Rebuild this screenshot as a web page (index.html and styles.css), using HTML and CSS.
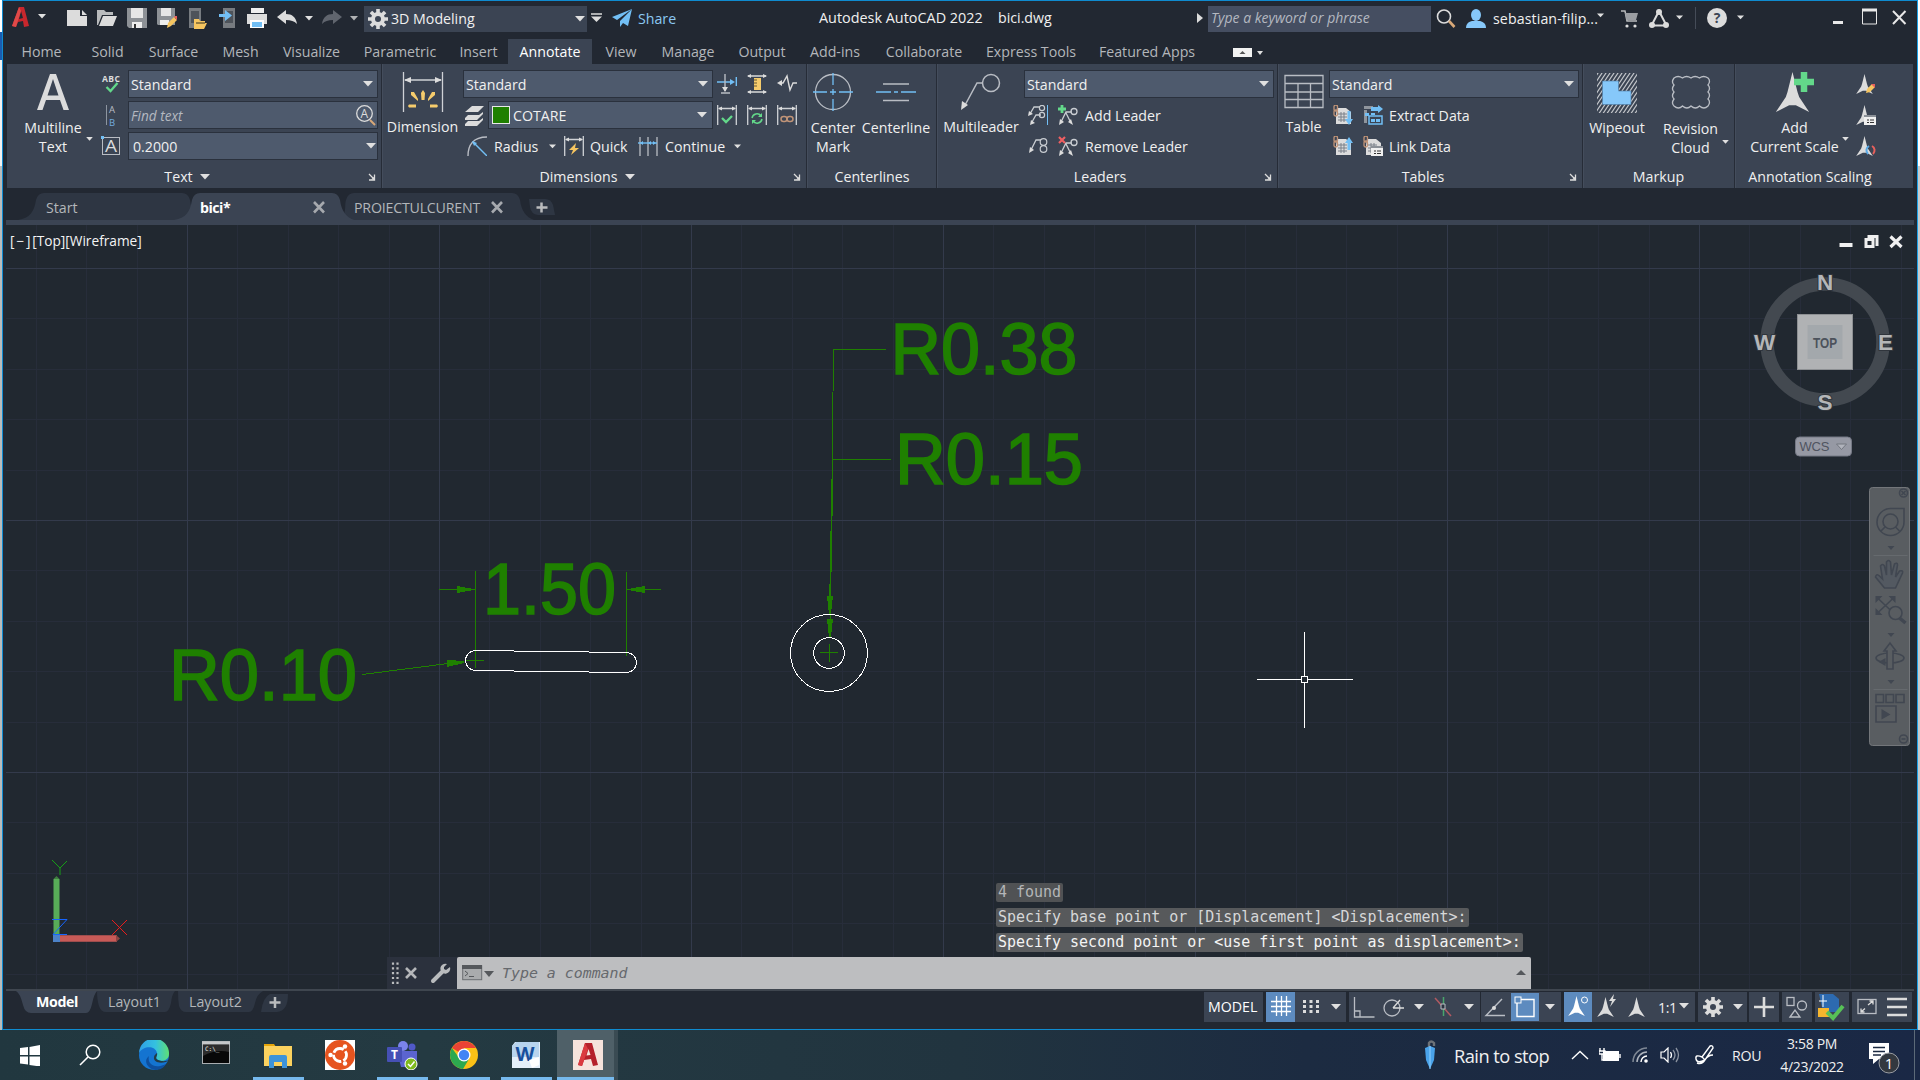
FILE: index.html
```html
<!DOCTYPE html>
<html lang="en">
<head>
<meta charset="utf-8">
<title>Autodesk AutoCAD 2022 - bici.dwg</title>
<link rel="stylesheet" href="styles.css">
</head>
<body>
<svg width="0" height="0" class="defs">
  <defs>
    <symbol id="arr" viewBox="0 0 10 6"><path d="M0 0h10L5 5.5z" fill="#e0e0e0"/></symbol>
    <symbol id="launch" viewBox="0 0 8 8"><path d="M1 1l5 5M6.5 1.5v5.5H1" stroke="#dcdcdc" stroke-width="1.3" fill="none"/><path d="M3 6.5h4V3z" fill="#dcdcdc"/></symbol>
    <symbol id="scale" viewBox="0 0 20 24"><path d="M10 0l3 12 1 3 6 9-8-4h-4l-8 4 6-9 1-3z"/></symbol>
    <symbol id="leader" viewBox="0 0 20 20"><path d="M3 17L8 7h6M12 16L8 8" fill="none" stroke="#c9cdd2" stroke-width="1.3"/><circle cx="16" cy="6.500" r="3" fill="none" stroke="#c9cdd2" stroke-width="1.3"/><path d="M1 20l1-6 4 3zM15 20l-5-3 3-3z" fill="#dcdcdc"/></symbol>
    <symbol id="sheet" viewBox="0 0 20 20"><path d="M4 3h9l5 4v12H3V9z" fill="#dcdcdc"/><path d="M5 9h9M5 12h9M5 15h9M8 7v10M11 7v10" stroke="#7b8089" stroke-width="1"/><rect x="1" y="0" width="3.500" height="6" rx="1.700" fill="none" stroke="#c09478" stroke-width="1.300"/><rect x="1" y="5" width="3.500" height="6" rx="1.700" fill="none" stroke="#c09478" stroke-width="1.300"/></symbol>
    <symbol id="dimbar" viewBox="0 0 20 20"><path d="M.7 0v20M19.300 0v20M2 3.500h16" stroke="#cfd2d6" stroke-width="1.300" fill="none"/><path d="M1 3.500l4-2v4zM19 3.500l-4-2v4z" fill="#dcdcdc"/></symbol>
    <symbol id="gear" viewBox="0 0 20 20"><g fill="#dcdcdc"><path fill-rule="evenodd" d="M10 3a7 7 0 1 0 0 14a7 7 0 0 0 0-14zm0 4a3 3 0 1 1 0 6a3 3 0 0 1 0-6z"/><path id="tooth" d="M8.200 0h3.600v4H8.200zM8.200 16h3.600v4H8.200z"/><use href="#tooth" transform="rotate(45 10 10)"/><use href="#tooth" transform="rotate(90 10 10)"/><use href="#tooth" transform="rotate(135 10 10)"/></g></symbol>
  </defs>
</svg>
<div class="screen">
<div class="edge edge-l"><i></i></div>
<div class="window">

  <header class="titlebar">
    <div class="app">
      <svg width="18" height="22" viewBox="0 0 18 22"><path d="M7 1h5l5 19-5 1-1-6-5 1-2 5-4-1z" fill="#c8272d"/><path d="M9 5l2 7-4 1z" fill="#222832"/><path d="M7 1l-7 19 4 1L9 5z" fill="#e04a49"/></svg>
      <svg width="8" height="5"><use href="#arr"/></svg>
    </div>
    <div class="qat">
      <svg width="30" height="24"><path d="M5 4h13v6h7v10H5z" fill="#dcdcdc"/><path d="M20 4l5 5h-5z" fill="#dcdcdc"/></svg>
      <svg width="30" height="24"><path d="M5 4h7l2 2h7v3H10L6 19H5z" fill="#b9bbbd"/><path d="M11 10h14l-4 10H7z" fill="#dcdcdc"/></svg>
      <svg width="30" height="24"><path d="M5 2h20v20H7l-2-2z" fill="#8d9196"/><path d="M9 2h12v10H9z" fill="#e6e6e6"/><path d="M10 16h10v6H10z" fill="#eee"/><path d="M12 18h2v4h-2z" fill="#333"/></svg>
      <svg width="30" height="24"><path d="M5 2h18v17H6l-1-1z" fill="#8d9196"/><path d="M9 2h10v8H9z" fill="#e6e6e6"/><path d="M8 14h9v5H8z" fill="#eee"/><path d="M15 22l1-5 6-6 3 3-6 6z" fill="#f6c560"/><path d="M22 11l1-1h2v4z" fill="#e8605c"/></svg>
      <svg width="30" height="24"><rect x="7" y="2" width="12" height="20" fill="#777b80"/><rect x="9" y="5" width="8" height="12" fill="#4e535a"/><path d="M12 13h5l1 2h5v2h2l-3 6H12z" fill="#f6c560"/><path d="M14 17h9" stroke="#35301e"/></svg>
      <svg width="30" height="24"><rect x="11" y="2" width="12" height="20" fill="#777b80"/><rect x="13" y="5" width="8" height="12" fill="#4e535a"/><path d="M7 8h6V4l7 5.500L13 15v-4H7z" fill="#72bff5"/></svg>
      <svg width="30" height="24"><path d="M9 2h13v5H9z" fill="#eee"/><path d="M5 8h20v10H5z" fill="#dcdcdc"/><path d="M8 14h14v8H8z" fill="#fff"/><path d="M10 16h10v5H10z" fill="#72bff5"/></svg>
      <svg width="30" height="24"><path d="M5 11l9-7v4c6 0 10 3 11 10-3-3-6-4-11-4v4z" fill="#dcdcdc"/></svg>
      <svg width="15" height="5"><use href="#arr" x="3" width="8" height="5"/></svg>
      <svg width="30" height="24"><path d="M25 11l-9-7v4C10 8 6 11 5 18c3-3 6-4 11-4v4z" fill="#60656e"/></svg>
      <svg width="15" height="5" class="dim"><use href="#arr" x="3" width="8" height="5"/></svg>
    </div>
    <div class="workspace"><svg width="20" height="20"><use href="#gear"/></svg><span>3D Modeling</span><svg width="10" height="6"><use href="#arr"/></svg></div>
    <svg class="custom" width="11" height="9"><path d="M0 1h11" stroke="#dcdcdc" stroke-width="1.500"/><path d="M0 3.500h11L5.500 9z" fill="#dcdcdc"/></svg>
    <svg class="plane" width="20" height="18" viewBox="0 0 20 18"><path d="M20 0L0 8l5 3zM20 0L8 12v6l3-4 5 3z" fill="#72bff5"/></svg>
    <span class="share">Share</span>
    <span class="apptitle">Autodesk AutoCAD 2022</span><span class="doctitle">bici.dwg</span>
    <svg class="tri" width="6" height="10"><path d="M0 0l6 5-6 5z" fill="#dcdcdc"/></svg>
    <div class="search">Type a keyword or phrase</div>
    <svg class="mag" width="20" height="20"><circle cx="8" cy="7.500" r="6.500" fill="none" stroke="#dcdcdc" stroke-width="1.600"/><path d="M13 12l5.500 6" stroke="#d8a878" stroke-width="2.600"/></svg>
    <svg class="user" width="22" height="20"><ellipse cx="11" cy="6" rx="5" ry="6" fill="#86c8fa"/><path d="M1 19c0-6 5-7 7-7h6c3 0 7 2 7 7z" fill="#86c8fa"/></svg>
    <span class="username">sebastian-filip...</span><svg width="7" height="5"><use href="#arr"/></svg>
    <svg class="cart" width="18" height="19"><path d="M0 1h4l2 10h10" fill="none" stroke="#b9bbbd" stroke-width="1.500"/><path d="M4 3h13l-2 7H5.500z" fill="#9b9ea3"/><circle cx="6" cy="16" r="1.600" fill="#ddd"/><circle cx="14" cy="16" r="1.600" fill="#ddd"/></svg>
    <svg class="a360" width="20" height="20"><path d="M10 2L2.500 16.500h15z" fill="none" stroke="#dcdcdc" stroke-width="2"/><circle cx="10" cy="3" r="3" fill="#dcdcdc"/><circle cx="3" cy="16" r="3" fill="#dcdcdc"/><circle cx="17" cy="16" r="3" fill="#dcdcdc"/></svg>
    <svg class="a360arr" width="7" height="5"><use href="#arr"/></svg>
    <i class="vsep"></i>
    <span class="help">?</span><svg class="helparr" width="7" height="5"><use href="#arr"/></svg>
    <svg class="winbtns" width="76" height="18" viewBox="0 0 76 18"><path d="M1 15.500h10" stroke="#e8e8e8" stroke-width="3"/><path d="M30.500 4v13h14V4" fill="none" stroke="#e8e8e8"/><path d="M30 3h15" stroke="#e8e8e8" stroke-width="3"/><path d="M61 4l12.500 13M73.500 4L61 17" stroke="#e8e8e8" stroke-width="2"/></svg>
  </header>

  <nav class="tabs">
    <span class="t1">Home</span><span class="t2">Solid</span><span class="t3">Surface</span><span class="t4">Mesh</span><span class="t5">Visualize</span><span class="t6">Parametric</span><span class="t7">Insert</span><span class="t8 on">Annotate</span><span class="t9">View</span><span class="t10">Manage</span><span class="t11">Output</span><span class="t12">Add-ins</span><span class="t13">Collaborate</span><span class="t14">Express Tools</span><span class="t15">Featured Apps</span>
    <svg width="31" height="10"><rect width="19" height="9" fill="#f2f2f2"/><path d="M6.500 6h6l-3-3z" fill="#555"/><path d="M24 3h6l-3 4z" fill="#e0e0e0"/></svg>
  </nav>

  <section class="ribbon">
    <div class="panel p-text">
      <div class="body">
        <div class="big">
          <svg width="46" height="46"><path fill-rule="evenodd" d="M20 4h6l13 36h-5.500l-3.500-10H16L12.500 40H7zM17.500 25.500h11L23 9z" fill="#dcdcdc"/></svg>
          <b>Multiline</b><b class="drop">Text<svg width="7" height="4"><use href="#arr"/></svg></b>
        </div>
        <div class="smalls">
          <svg width="22" height="28"><text x="1" y="12" font-size="8.500" font-weight="700" textLength="18" fill="#dcdcdc" font-family="Open Sans,sans-serif">ABC</text><path d="M5.500 17l4 4 7-8" fill="none" stroke="#63d88a" stroke-width="2.300"/></svg>
          <svg width="22" height="28"><path d="M5.500 4v20" stroke="#8d95a0"/><text x="8" y="12" font-size="9.500" fill="#b9bdc4" font-family="Open Sans,sans-serif">A</text><text x="8" y="24.500" font-size="9.500" fill="#72a9dd" font-family="Open Sans,sans-serif">B</text></svg>
          <svg width="22" height="28"><rect x="1.500" y="5.500" width="17" height="17" fill="none" stroke="#b9bdc4"/><path d="M0 4h3v3H0z" fill="#72bff5"/><text x="4" y="20" font-size="17" fill="#dcdcdc" font-family="Open Sans,sans-serif" textLength="12" lengthAdjust="spacingAndGlyphs">A</text></svg>
        </div>
        <div class="rows">
          <div class="combo">Standard<svg width="10" height="6"><use href="#arr"/></svg></div>
          <div class="combo ph"><em>Find text</em><svg width="20" height="21"><circle cx="8.500" cy="8.500" r="7.800" fill="none" stroke="#dcdcdc" stroke-width="1.300"/><path d="M14 15l5 5" stroke="#d8a878" stroke-width="2"/><text x="4.500" y="13" font-size="12" fill="#dcdcdc" font-family="Open Sans,sans-serif">A</text></svg></div>
          <div class="combo n">0.2000<svg width="10" height="6"><use href="#arr"/></svg></div>
        </div>
      </div>
      <div class="ptitle launch">Text<svg class="ta" width="10" height="6"><use href="#arr"/></svg><svg class="la" width="8" height="8"><use href="#launch"/></svg></div>
    </div>

    <div class="panel p-dim">
      <div class="body">
        <div class="big s1">
          <svg width="42" height="46"><path d="M1.500 2v40M40.500 2v40M3 10h36" stroke="#cfd2d6" stroke-width="1.300"/><path d="M2 10l7-3v6zM40 10l-7-3v6z" fill="#dcdcdc"/><path d="M19.500 30l-.5-7 2-3 2 3-.5 7zM16 31l-7-6 0-3 3 0 4 7zM26 31l7-6 0-3-3 0-4 7zM14 37.500H7l-1-1.500 1-1.500h7zM28 37.500h7l1-1.500-1-1.500h-7z" fill="#f6cc6c"/></svg>
          <b>Dimension</b>
        </div>
        <div class="rows">
          <div class="combo">Standard<svg width="10" height="6"><use href="#arr"/></svg></div>
          <div class="lay"><svg width="25" height="28"><path d="M2 11L9 5h12l-6 6zM2 17l3-3h11l4-3v2l-6 6H2zM2 23l3-3h11l4-3v2l-6 6H2z" fill="#dcdcdc"/></svg><div class="combo"><i class="sw"></i>COTARE<svg width="10" height="6"><use href="#arr"/></svg></div></div>
          <div class="tools">
            <svg width="20" height="20"><path d="M1 20C1 9 6 1 20 1" fill="none" stroke="#b9bdc4" stroke-width="1.400"/><path d="M6 6l14 14" stroke="#72bff5" stroke-width="1.400"/><path d="M5 5l5 2-3 3z" fill="#72bff5"/></svg><span class="c1">Radius</span><svg width="7" height="5"><use href="#arr"/></svg>
            <svg class="c2" width="20" height="20"><use href="#dimbar"/><path d="M12 7l-7 7h4l-2 5 8-7h-4z" fill="#f6c560"/></svg><span class="c3">Quick</span>
            <svg class="c4" width="20" height="20"><path d="M2 1v19M10 1v19M19 1v19" stroke="#b9bdc4" stroke-width="1.300"/><path d="M0 7h19" stroke="#72bff5" stroke-width="1.400"/><path d="M2 7l3-2v4zM10 7l3-2v4zM18 7l-3-2v4z" fill="#72bff5"/></svg><span class="c5">Continue</span><svg width="7" height="5"><use href="#arr"/></svg>
          </div>
        </div>
        <div class="six">
          <svg width="20" height="20"><path d="M0 8h16M19.300 3v9" stroke="#72bff5" stroke-width="1.400"/><path d="M18 8l-5-3v6z" fill="#72bff5"/><path d="M8 0v17M4 19h9" stroke="#b9bdc4" stroke-width="1.400"/><path d="M8 18l-3-5h6z" fill="#dcdcdc"/></svg>
          <svg width="20" height="20"><path d="M1 2h18M1 18h18" stroke="#dcdcdc" stroke-width="1.400"/><path d="M0 2l4-2v4zM20 2l-4-2v4zM0 18l4-2v4zM20 18l-4-2v4z" fill="#dcdcdc"/><path d="M7 4h7v12H7z" fill="#f6cc6c"/><path d="M7 6h3M7 9h3M7 12h3" stroke="#6b5a30"/></svg>
          <svg width="20" height="20"><path d="M2 9h4l4-7 3 14 3-7h4" fill="none" stroke="#dcdcdc" stroke-width="1.400"/><path d="M0 9l5-3v6z" fill="#dcdcdc"/></svg>
          <svg width="20" height="20"><use href="#dimbar"/><path d="M5 13l4 4 6-6" fill="none" stroke="#63d88a" stroke-width="2.300"/></svg>
          <svg width="20" height="20"><use href="#dimbar"/><path d="M5 13a5 5 0 0 1 9-2M15 14a5 5 0 0 1-9 2" fill="none" stroke="#63d88a" stroke-width="1.500"/><path d="M15 8v4h-4zM5 19v-4h4z" fill="#63d88a"/></svg>
          <svg width="20" height="20"><use href="#dimbar"/><rect x="4" y="11.500" width="6" height="5" rx="2.500" fill="none" stroke="#c09478" stroke-width="1.500"/><rect x="10" y="11.500" width="6" height="5" rx="2.500" fill="none" stroke="#c09478" stroke-width="1.500"/></svg>
        </div>
      </div>
      <div class="ptitle launch">Dimensions<svg class="ta" width="10" height="6"><use href="#arr"/></svg><svg class="la" width="8" height="8"><use href="#launch"/></svg></div>
    </div>

    <div class="panel p-cen">
      <div class="body">
        <div class="big a">
          <svg width="42" height="46"><circle cx="21" cy="22" r="17.500" fill="none" stroke="#b9bdc4" stroke-width="1.300"/><path d="M1 22h14M18 22h6M27 22h14M21 3v12M21 19v6M21 29v12" stroke="#72bff5" stroke-width="1.300"/></svg>
          <b>Center</b><b>Mark</b>
        </div>
        <div class="big c">
          <svg width="42" height="46"><path d="M8 14h26M8 30.500h26" stroke="#b9bdc4" stroke-width="1.300"/><path d="M1 22h15M19 22h4M26 22h15" stroke="#72bff5" stroke-width="1.300"/></svg>
          <b>Centerline</b>
        </div>
      </div>
      <div class="ptitle">Centerlines</div>
    </div>

    <div class="panel p-lead">
      <div class="body">
        <div class="big s1">
          <svg width="42" height="46"><circle cx="32" cy="13" r="8.500" fill="none" stroke="#b9bdc4" stroke-width="1.500"/><path d="M5 37L18 13h5" fill="none" stroke="#b9bdc4" stroke-width="1.500"/><path d="M2 40l1-9 6 4z" fill="#dcdcdc"/></svg>
          <b>Multileader</b>
        </div>
        <div class="rows">
          <div class="combo">Standard<svg width="10" height="6"><use href="#arr"/></svg></div>
          <div class="tools l"><svg width="20" height="20"><path d="M2 9l4-7h6M4 17l4-7h5" fill="none" stroke="#c9cdd2" stroke-width="1.300"/><circle cx="14" cy="3" r="2.600" fill="none" stroke="#c9cdd2" stroke-width="1.200"/><circle cx="14" cy="10" r="2.600" fill="none" stroke="#c9cdd2" stroke-width="1.200"/><path d="M19.500 0v20" stroke="#72bff5"/><path d="M0 11l1-5 4 3zM2 20l1-5 4 3z" fill="#dcdcdc"/></svg><svg class="m" width="20" height="20"><use href="#leader"/><path d="M4 0v8M0 4h8" stroke="#63d88a" stroke-width="2.800"/></svg><span>Add Leader</span></div>
          <div class="tools l"><svg width="20" height="20"><path d="M3 14L8 4h5" fill="none" stroke="#c9cdd2" stroke-width="1.300"/><circle cx="15.500" cy="6" r="3.300" fill="none" stroke="#c9cdd2" stroke-width="1.200"/><circle cx="15.500" cy="13" r="3.300" fill="none" stroke="#c9cdd2" stroke-width="1.200"/><path d="M1 17l1-6 4 3z" fill="#dcdcdc"/></svg><svg class="m" width="20" height="20"><use href="#leader"/><path d="M1 1l6 6M7 1L1 7" stroke="#ee5f62" stroke-width="2.200"/></svg><span>Remove Leader</span></div>
        </div>
      </div>
      <div class="ptitle launch">Leaders<svg class="la" width="8" height="8"><use href="#launch"/></svg></div>
    </div>

    <div class="panel p-tab">
      <div class="body">
        <div class="big s1">
          <svg width="42" height="46"><path d="M2 5.500h38v32H2zM2 13.500h38M2 22h38M2 29.500h38M15 13.500v24M27.500 13.500v24" fill="none" stroke="#b9bdc4" stroke-width="1.300"/></svg>
          <b>Table</b>
        </div>
        <div class="rows">
          <div class="combo">Standard<svg width="10" height="6"><use href="#arr"/></svg></div>
          <div class="tools l"><svg width="20" height="20"><use href="#sheet"/><path d="M16 6v9" stroke="#72bff5" stroke-width="3"/><path d="M12 14h8l-4 6z" fill="#72bff5"/></svg><svg class="m" width="20" height="20"><path d="M1 1h9v3H1zM1 5h3v13H1z" fill="#8f959d"/><path d="M8 2h7V0l5 4-5 4V6H8z" fill="#72bff5"/><path d="M6 11h13v8H6z" fill="none" stroke="#72bff5" stroke-width="1.500"/><path d="M8 14h4v3H8zM13 14h4v3h-4zM2 8h4v3H2zM8 8h4v2H8z" fill="#72bff5"/></svg><span>Extract Data</span></div>
          <div class="tools l"><svg width="20" height="20"><use href="#sheet"/><path d="M16 6v8" stroke="#72bff5" stroke-width="3"/><path d="M12 7h8l-4-6z" fill="#72bff5"/></svg><svg class="m" width="20" height="20"><use href="#sheet"/><path d="M8 10h12v10H8z" fill="#f0f0f0"/><path d="M8 11h12" stroke="#8b9097" stroke-width="2"/><path d="M11 15h2M14 15h4M11 17.500h2M14 17.500h4" stroke="#333"/></svg><span>Link Data</span></div>
        </div>
      </div>
      <div class="ptitle launch">Tables<svg class="la" width="8" height="8"><use href="#launch"/></svg></div>
    </div>

    <div class="panel p-mark">
      <div class="body">
        <div class="big a">
          <svg width="42" height="46"><defs><pattern id="hatch" width="4" height="6" patternUnits="userSpaceOnUse"><path d="M-1 7.500L5-1.500M-3 4.500l4-6M1 10.500l4-6" stroke="#c4c7cb" stroke-width="1.200"/></pattern></defs><rect x="1" y="3" width="40" height="40" fill="url(#hatch)"/><path d="M6.500 11h16v10H35v13.500H6.500z" fill="#86c8fa" stroke="#4a7ba6" stroke-width=".6"/></svg>
          <b>Wipeout</b>
        </div>
        <div class="big c s2">
          <svg width="44" height="46"><path d="M5 8q4-3 8.500 0q4-3 8.500 0q4-3 8.500 0q4-3 8.500 0q3 3 0 7q3 3 0 7q3 3 0 7q3 3 0 7q-4 4-8.500 0q-4 4-8.500 0q-4 4-8.500 0q-4 4-8.500 0q-3-3 0-7q-3-3 0-7q-3-3 0-7q-3-3 0-7z" fill="none" stroke="#b9bdc4" stroke-width="1.300"/></svg>
          <b>Revision</b><b class="drop">Cloud<svg width="7" height="4"><use href="#arr"/></svg></b>
        </div>
      </div>
      <div class="ptitle">Markup</div>
    </div>

    <div class="panel p-ann">
      <div class="body">
        <div class="big">
          <svg width="44" height="46"><use href="#scale" x="2" y="2" width="35" height="40" fill="#dcdcdc"/><path d="M31 2v20M21 12h20" stroke="#63d88a" stroke-width="6.500"/></svg>
          <b>Add</b><b class="drop">Current Scale<svg width="7" height="4"><use href="#arr"/></svg></b>
        </div>
        <div class="smalls">
          <svg width="22" height="28"><use href="#scale" x="1" y="4" width="17" height="20" fill="#dcdcdc"/><path d="M11 23l1-4 5-5 3 3-5 5z" fill="#f6c560"/><path d="M16 14h4v4z" fill="#e8605c"/></svg>
          <svg width="22" height="28"><use href="#scale" x="1" y="4" width="17" height="20" fill="#dcdcdc"/><path d="M9 14h12v10H9z" fill="#f0f0f0"/><path d="M9 15h12" stroke="#8b9097" stroke-width="2"/><path d="M12 19h2M15 19h4M12 21.500h2M15 21.500h4" stroke="#333"/></svg>
          <svg width="22" height="28"><use href="#scale" x="1" y="4" width="17" height="20" fill="#dcdcdc"/><path d="M14 14a5 5 0 0 0-1 8" fill="none" stroke="#5aa9e6" stroke-width="2"/><path d="M17 14a5 5 0 0 1 1 8" fill="none" stroke="#e8605c" stroke-width="2"/></svg>
        </div>
      </div>
      <div class="ptitle">Annotation Scaling</div>
    </div>
  </section>

  <div class="files">
    <div class="shapes"><svg width="600" height="32" viewBox="0 0 600 32">
      <path d="M12 32c12-2 16-8 18-20q2-7 8-7h138q6 0 8 7q2 16 14 20z" fill="#2e3643"/>
      <path d="M330 32c12-2 8-14 10-20q2-7 8-7h158q6 0 8 7q2 16 14 20z" fill="#2e3643"/>
      <path d="M168 32c12-2 16-8 18-20q2-7 8-7h132q6 0 8 7q2 16 14 20z" fill="#3b4453"/>
      <path d="M532 27q-7-1-8-8l-1-8h16q6 0 8 6l2 10z" fill="#2e3643"/>
      <path d="M528 15v10M523 20h11" transform="translate(7.500 -.5)" stroke="#b9bbbd" stroke-width="2.500"/>
      <path d="M308 13.500l10 10.500M318 13.500l-10 10.500M486 13.500l10 10.500M496 13.500l-10 10.500" transform="translate(0 .5)" stroke="#a6a9ae" stroke-width="2.600"/></svg></div>
    <span class="f1">Start</span><span class="f2">bici*</span><span class="f3">PROIECTULCURENT</span>
  </div>

  <main class="canvas">
    <svg class="drawing" width="1907" height="764" viewBox="6 225 1907 764" font-family="Liberation Sans,Arial,sans-serif">
      <g shape-rendering="crispEdges" stroke="#1f8000" fill="none">
        <path d="M886 349.500H833.500L832 480L829.500 610M891 459.500H833L830 630M439 589.500H475M661 589.500H627M475.500 571V668M626.500 572V656M466 660.500H484M362 674.500L464 661.500M820 652.500H838M829.500 644V662"/>
      </g>
      <g fill="#1f8000" shape-rendering="crispEdges">
        <path d="M827 596h6l-2 18h-2zM827 619h6l-2 18h-2zM457 586v7l17-3v-1zM645 586v7l-17-3v-1zM447 660v7l17-4v-2z"/>
      </g>
      <g fill="#1f8000" stroke="#1f8000" stroke-width="1.600" font-size="73">
        <text x="890.500" y="374" textLength="187" lengthAdjust="spacingAndGlyphs">R0.38</text>
        <text x="895" y="483.500" textLength="188" lengthAdjust="spacingAndGlyphs">R0.15</text>
        <text x="483" y="614" textLength="133" lengthAdjust="spacingAndGlyphs">1.50</text>
        <text x="169" y="699.500" textLength="188" lengthAdjust="spacingAndGlyphs">R0.10</text>
      </g>
      <g stroke="#fff" fill="none" shape-rendering="crispEdges">
        <circle cx="829" cy="653" r="38.500"/><circle cx="829" cy="653" r="15.300"/>
        <path d="M476 650.500L626 652.500a10 10 0 0 1 1 20L475 670.500a10 10 0 0 1 1-20z"/>
        <path d="M1257 679.500H1301M1308 679.500H1353M1304.500 632V676M1304.500 683V728M1301.500 676.500h6v6h-6z"/>
      </g>
      <g fill="none">
        <path d="M56.500 879V936" stroke="#58ac58" stroke-width="6"/><path d="M53.500 879l3-3 3 3z" fill="#3e7e3e"/>
        <path d="M60 938.500H117" stroke="#c85a57" stroke-width="6.500"/><path d="M116 935l4 3.500-4 3.500z" fill="#8c4442"/>
        <rect x="53" y="935" width="7" height="7" fill="#4c82c8"/>
        <path d="M52 860l8 8 7-7M60 868v7" stroke="#16a016"/>
        <path d="M52 919.500h15L53 934.500h14" stroke="#1565ff"/>
        <path d="M112 920l15 15M127 920l-15 15" stroke="#e81c1c"/>
      </g>
      <g transform="translate(-1.500 0)">
      <circle cx="1826.500" cy="342" r="58" fill="none" stroke="#434950" stroke-width="13.500"/>
      <rect x="1799" y="314.500" width="55" height="55" fill="#b0b2b4" stroke="#8d9093"/>
      <rect x="1809" y="325" width="35" height="34" fill="#a3a8ac"/>
      <g font-weight="700" text-anchor="middle" fill="#b4b6b8" stroke="#30353c" stroke-width="2" paint-order="stroke">
        <g font-size="22.500"><text x="1826.500" y="290">N</text><text x="1826.500" y="409.500">S</text><text x="1766" y="350">W</text><text x="1887" y="350">E</text></g>
        <text x="1826.500" y="347.500" font-size="15.500" fill="#4c525b" stroke="none" textLength="24" lengthAdjust="spacingAndGlyphs">TOP</text>
      </g>
      <rect x="1797" y="437" width="56" height="19" rx="4" fill="#9699a4" stroke="#747884"/>
      <text x="1801" y="451" font-size="13" fill="#4f5460" textLength="30">WCS</text>
      <path d="M1838 444h10l-5 5.500z" fill="#b0b3bc" stroke="#72767f"/>
      <g fill="#f0f0f0"><path d="M1841 243h13v4h-13z"/><path fill-rule="evenodd" d="M1866 238h10v10h-10zM1869 241v4h4v-4z"/><path d="M1869 235h11v11h-3v-8h-8z"/></g>
      <path d="M1892 236.500l11 10.500M1903 236.500l-11 10.500" stroke="#f0f0f0" stroke-width="3.200"/>
      <rect x="1871" y="487.500" width="40" height="258" rx="3" fill="#595d61" stroke="#73767a"/>
      <g fill="none" stroke="#414751" stroke-width="1.600">
        <circle cx="1905" cy="493" r="4"/><path d="M1903 491l4 4M1907 491l-4 4"/>
        <path d="M1892 508.500h13.500V522A13.500 13.500 0 1 1 1892 508.500z"/><circle cx="1892" cy="521.500" r="7.500"/><path d="M1882.500 531l4.500-4.500M1901 531l-4-4"/>
        <path d="M1886 588l-9-11q1-4 4-1l3 3-2-13q2-3 4 0l2 9 0-13q2-3 4 0l1 13 3-11q3-2 3 1l-2 12 4-6q4-1 3 2l-7 15z" fill="#535961"/>
        <path d="M1878 597l18 17M1896 597l-18 17"/><circle cx="1897" cy="613" r="6.500" fill="#595d61"/><path d="M1901 618l6 5" stroke-width="3.500"/>
        <ellipse cx="1891.500" cy="658" rx="14" ry="5"/><path d="M1888.500 669v-18h-3l6-8 6 8h-3v18z" fill="#595d61"/>
        <path d="M1877.500 694.500h7.500v8h-7.500zM1887.500 694.500h7.500v8h-7.500zM1897.500 694.500h8v8h-8zM1877.500 706h20v16h-20z"/>
        <circle cx="1905" cy="739" r="4"/><path d="M1903 739h4"/>
      </g>
      <g fill="#414751"><path d="M1889 546h7l-3.500 4zM1889 633h7l-3.500 4zM1889 680h7l-3.500 4zM1877 596h7l-7 7zM1897 596h-7l7 7zM1877 615v-7l7 7zM1880 662l7-4v8zM1883 709l9 5.500-9 5z"/></g>
      <path d="M1875 555.500h34M1875 689.500h34" stroke="#666a6e"/>
      </g>
    </svg>
    <div class="vplabel"><span>[−]</span>[Top][Wireframe]</div>
    <div class="history"><span class="h1">4 found</span><span class="h2">Specify base point or [Displacement] &lt;Displacement&gt;:</span><span class="h3">Specify second point or &lt;use first point as displacement&gt;:</span></div>
    <div class="cmd">
      <svg width="70" height="32"><path d="M6 5.500v22M10.500 5.500v22" stroke="#b9bbbd" stroke-width="2.200" stroke-dasharray="2.200 2.600"/><path d="M19 11l10 10M29 11L19 21" stroke="#b4b6b9" stroke-width="2.600"/><path d="M46 24l9-9" stroke="#b9bbbd" stroke-width="4" stroke-linecap="round"/><path d="M60 7a5 5 0 1 0 3 3l-4 3-2-1v-2z" fill="#b9bbbd"/></svg>
      <div class="input"><svg width="34" height="20"><rect x=".7" y="2.700" width="19" height="14" fill="#a9abad" stroke="#6b6e72"/><path d="M0 4h20" stroke="#55585c" stroke-width="4"/><path d="M3 8l3 2.500-3 2.500M7 13.500h5" fill="none" stroke="#55585c"/><path d="M22 8h10l-5 6z" fill="#55585c"/></svg><em>Type a command</em><svg class="up" width="10" height="6"><path d="M0 5h10L5 0z" fill="#55585c"/></svg></div>
    </div>
  </main>

  <footer class="bottom">
    <div class="layouts">
      <svg width="300" height="24" viewBox="6 989 300 24"><path d="M16 991h81q-3 3-5 13-2 9-6 9H31q-6 0-8-8-3-12-7-14z" fill="#3b4453"/><path d="M97 991h78q-3 3-4 12-2 9-6 9h-59q-5 0-7-6-2-6-2-15zM178 991h85q-6 3-8 12-2 9-6 9h-63q-5 0-7-6-1-6-1-15z" fill="#2e3643"/><path d="M270 994h18q0 17-11 18h-16q2-15 9-18z" fill="#2e3643"/><path d="M275 997v11M269.500 1002.500h11" stroke="#b9bbbd" stroke-width="2.500"/></svg>
      <span class="m1">Model</span><span class="m2">Layout1</span><span class="m3">Layout2</span>
    </div>
    <div class="status">
      <span class="g g1">MODEL</span>
      <span class="g g2"><i class="blue"><svg width="29" height="29"><path d="M10.500 4v20M15.500 4v20M20.500 4v20M5 9.500h20M5 14.500h20M5 19.500h20" stroke="#fff" stroke-width="1.300"/></svg></i><svg width="51" height="30"><path d="M8 9.500h16M8 14.500h16M8 19.500h16" stroke="#dcdcdc" stroke-width="3" stroke-dasharray="3 3.500"/><use href="#arr" x="36" y="12" width="10" height="6"/></svg></span>
      <span class="g g3"><svg width="131" height="30"><path d="M5.500 5v20h20M5 19h6v6" fill="none" stroke="#b9bdc4" stroke-width="1.300"/><circle cx="43" cy="16" r="8" fill="none" stroke="#b9bdc4" stroke-width="1.300"/><path d="M44 16h11M44 16l7-8" stroke="#dcdcdc" stroke-width="1.300"/><use href="#arr" x="65" y="12" width="10" height="6"/><path d="M86 6l16 18" stroke="#b25a62" stroke-width="1.500"/><path d="M94.500 5v19" stroke="#4aa56c" stroke-width="1.500"/><path d="M92 12h4v5h-4z" fill="#2b3340" stroke="#b9bdc4"/><use href="#arr" x="115" y="12" width="10" height="6"/></svg></span>
      <span class="g g4"><svg width="30" height="30"><path d="M24 23.500H5L21 7" fill="none" stroke="#b9bdc4" stroke-width="1.400"/><circle cx="13" cy="16" r="2" fill="#dcdcdc"/></svg><i class="blue"><svg width="28" height="29"><path d="M6 6.500h17v17H6z" fill="none" stroke="#fff" stroke-width="1.400"/><rect x="4" y="4" width="6" height="6" fill="#5d8bbf" stroke="#fff"/></svg></i><svg width="22" height="30"><use href="#arr" x="6" y="12" width="10" height="6"/></svg></span>
      <span class="g g5"><i class="blue"><svg width="28" height="29"><use href="#scale" x="4" y="4" width="17" height="20" fill="#fff"/><circle cx="20.500" cy="8" r="3" fill="none" stroke="#fff"/></svg></i><svg width="66" height="30"><use href="#scale" x="5" y="5" width="17" height="20" fill="#dcdcdc"/><path d="M22 2l-5 7h3l-2 6 6-8h-3z" fill="#dcdcdc"/><use href="#scale" x="36" y="5" width="17" height="20" fill="#dcdcdc"/></svg><b>1:1</b><svg width="14" height="30"><use href="#arr" x="3" y="11" width="10" height="6"/></svg></span>
      <span class="g g6"><svg width="49" height="30"><use href="#gear" x="5" y="5" width="20" height="20"/><use href="#arr" x="35" y="12" width="10" height="6"/></svg></span>
      <span class="g g7"><svg width="30" height="30"><path d="M15 5v20M5 15h20" stroke="#dcdcdc" stroke-width="2.600"/></svg></span>
      <span class="g g8"><svg width="30" height="30"><rect x="5" y="5.500" width="7" height="8" fill="none" stroke="#b9bdc4" stroke-width="1.300"/><circle cx="20" cy="13.500" r="4.500" fill="none" stroke="#b9bdc4" stroke-width="1.300"/><path d="M8 25l5-7 5 7z" fill="none" stroke="#b9bdc4" stroke-width="1.300"/></svg></span>
      <span class="g g9"><svg width="34" height="30"><path d="M4 2h14l6 5v13H8z" fill="#2d6ab0"/><path d="M4 9h8M8 3v12" stroke="#fff"/><path d="M3 16h11v9H3z" fill="#f5b52e"/><path d="M12 20l6 6 10-12" fill="none" stroke="#57c157" stroke-width="4"/></svg></span>
      <span class="g g10"><svg width="60" height="30"><rect x="6" y="7.500" width="18" height="14" fill="none" stroke="#b9bdc4" stroke-width="1.300"/><path d="M16 13l5-4M9 20l4-3.500M17.500 9H21v3.500M9 16.500V20h3.500" fill="none" stroke="#dcdcdc" stroke-width="1.300"/><path d="M35 7h20M35 15h20M35 23h20" stroke="#dcdcdc" stroke-width="2.600"/></svg></span>
    </div>
  </footer>
</div>
<div class="edge edge-r"></div>

<div class="taskbar">
  <div class="apps">
    <span><svg width="22" height="22"><path d="M1 4l8-1v8H1zM10.500 3L21 1v10H10.500zM1 12.500h8v8l-8-1zM10.500 12.500H21v10l-10.500-1.500z" fill="#fff"/></svg></span>
    <span><svg width="22" height="22"><circle cx="14" cy="8" r="6.800" fill="none" stroke="#fff" stroke-width="1.500"/><path d="M9 13l-8 8" stroke="#fff" stroke-width="1.600"/></svg></span>
    <span><svg width="30" height="30"><defs><linearGradient id="eg" x1="0" x2="1"><stop offset="0" stop-color="#2f9fe6"/><stop offset=".55" stop-color="#34c1e0"/><stop offset="1" stop-color="#5fe074"/></linearGradient></defs><circle cx="15" cy="15" r="15" fill="#1474d1"/><path d="M0 13A15 15 0 0 1 30 14c0 6-6 8-11 6-4-2 0-4-1-7C16 5 4 6 0 13z" fill="url(#eg)"/><path d="M10 16c-2 7 4 14 17 8-4 7-12 7-16 4-5-4-5-9-1-12z" fill="#0e4f9e"/><path d="M30 20c-4 4-16 4-15-3 0-2 2-3 3-4 1 3-3 5 1 7 5 2 9 1 11 0z" fill="#233a44"/></svg></span>
    <span><svg width="28" height="28"><rect x=".5" y=".5" width="27" height="22" fill="#080808" stroke="#a9adb0"/><path d="M0 2h28" stroke="#c6c8ca" stroke-width="3"/><path d="M1 4h26v7Q14 8 1 15z" fill="#2c2c2c"/><text x="3" y="10" font-size="6" fill="#eee" font-family="DejaVu Sans Mono,monospace">C:\_</text></svg></span>
    <span class="run"><svg width="28" height="26"><path d="M0 2h10l2 3h-12z" fill="#e5a50a"/><path d="M0 4h28v20H0z" fill="#fbd25f"/><path d="M5 15q0-2 2-2h14q2 0 2 2v11h-5v-6h-8v6H5z" fill="#3d93d8"/></svg></span>
    <span><svg width="30" height="30"><rect width="30" height="30" fill="#fff"/><circle cx="15" cy="15" r="15" fill="#e6541f"/><circle cx="15" cy="15" r="6.500" fill="none" stroke="#fff" stroke-width="2.800" stroke-dasharray="11.500 2.100" stroke-dashoffset="5"/><circle cx="5.500" cy="15" r="2.200" fill="#fff"/><circle cx="20" cy="6.500" r="2.200" fill="#fff"/><circle cx="20" cy="23.500" r="2.200" fill="#fff"/></svg></span>
    <span class="run"><svg width="32" height="30"><circle cx="17" cy="6" r="5" fill="#7b83eb"/><circle cx="26" cy="7" r="3.500" fill="#5059c9"/><path d="M11 11h20v9q-2 7-8 7h-8z" fill="#5b64d0"/><rect x="1" y="7" width="15" height="15" rx="1" fill="#4650b5"/><text x="8.500" y="19" font-size="12" font-weight="700" text-anchor="middle" fill="#fff" font-family="Open Sans,sans-serif">T</text><circle cx="25" cy="24" r="6" fill="#7fba1f" stroke="#fff"/><path d="M22 24l2.500 2.500 4-5" fill="none" stroke="#fff" stroke-width="1.500"/></svg></span>
    <span class="run"><svg width="28" height="28"><circle cx="14" cy="14" r="14" fill="#fbc116"/><path d="M14 14L1.900 7A14 14 0 0 1 26.100 7H14z" fill="#ea4335"/><path d="M14 14l-4 4-8.100-11A14 14 0 0 0 13 28l6-10z" fill="#2da94f"/><circle cx="14" cy="14" r="6.500" fill="#fff"/><circle cx="14" cy="14" r="5.200" fill="#4285f4"/></svg></span>
    <span class="run"><svg width="28" height="28"><path d="M3 1h25v26H0V5z" fill="#e4effa"/><path d="M4 1h23v15H0V5z" fill="#b8d4ee"/><text x="13" y="20" font-size="20" font-weight="700" text-anchor="middle" fill="#174f9c" font-family="Open Sans,sans-serif" textLength="19" lengthAdjust="spacingAndGlyphs">W</text><path d="M17 19l10-3v8l-7 3z" fill="#fff"/></svg></span>
    <span class="run on"><svg width="30" height="30"><rect width="30" height="30" fill="#f6e3dc"/><path d="M12 3h7l6 22-5 1-2-7-7 1-2 6-4-1z" fill="#b5202b"/><path d="M15.500 9l2 6-4 .5z" fill="#f6e3dc"/><path d="M12 3L5 25l4 1 6-17z" fill="#db3a40"/></svg></span>
  </div>
  <div class="tray">
    <svg class="umb" width="14" height="30"><path d="M6 7V3q2-3 5 0v3" fill="none" stroke="#6d7277" stroke-width="2.400"/><path d="M2 8l5-2 5 2-1 12-4 9-4-9z" fill="#4aa3ea"/><path d="M7 6v23" stroke="#8fd0ff"/></svg>
    <span class="rain">Rain to stop</span>
    <svg class="car" width="18" height="10"><path d="M1 9l8-7.500L17 9" fill="none" stroke="#fff" stroke-width="1.400"/></svg>
    <svg class="bat" width="22" height="16"><rect x="4.500" y="4.500" width="15" height="9" fill="#fff" stroke="#fff"/><path d="M21 7v4M1 1v3M5 1v3M0 4h6v3H0zM3 7v6h2" fill="none" stroke="#fff" stroke-width="1.400"/></svg>
    <svg class="wif" width="17" height="16"><g fill="none" stroke-width="1.500"><path d="M1 15A14 14 0 0 1 15 1" stroke="#7e8794"/><path d="M5 15A10 10 0 0 1 15 5" stroke="#aeb4bd"/><path d="M9 15a6 6 0 0 1 6-6" stroke="#fff"/></g><circle cx="14" cy="14" r="1.800" fill="#fff"/></svg>
    <svg class="vol" width="20" height="16"><path d="M1 5h3l4-4v14l-4-4H1z" fill="none" stroke="#fff" stroke-width="1.200"/><path d="M10.500 5q2 3 0 6" fill="none" stroke="#fff" stroke-width="1.300"/><path d="M13 3q4 5 0 10M16 1q5 7 0 14" fill="none" stroke="#8b93a0" stroke-width="1.300"/></svg>
    <svg class="pen" width="22" height="22"><path d="M8 13l8-11q3-1 3 2l-8 12zM8 13q-7-3-6 2t9 1q3-5 8-5M3 19q5 2 8-3" fill="none" stroke="#fff" stroke-width="1.400"/></svg>
    <span class="rou">ROU</span>
    <div class="clock"><span>3:58 PM</span><span>4/23/2022</span></div>
    <svg class="note" width="32" height="32"><path d="M1 1h20v16H11l-6 5v-5H1z" fill="#fff"/><path d="M5 5.500h12M5 9.500h12M5 13h8" stroke="#1c2a42" stroke-width="1.400"/><circle cx="21" cy="21" r="10" fill="#33383f" stroke="#9a9da2"/><text x="21" y="26.500" font-size="15" text-anchor="middle" fill="#fff" font-family="Open Sans,sans-serif">1</text></svg>
    <i class="peek"></i>
  </div>
</div>
</div>
</body>
</html>
```

FILE: styles.css
```css
*{box-sizing:border-box}
body{margin:0;background:#222832;font-family:"Open Sans","Noto Sans",sans-serif;font-size:14.2px;color:#f0f0f0;white-space:nowrap;overflow:hidden}
svg{display:block;flex:none}
.defs{position:absolute}
b,i{font-style:normal;font-weight:400}
.screen{width:1920px;height:1080px;display:grid;grid-template-columns:2px 1916px 2px;grid-template-rows:1030px 50px}
.edge{background:#c4c6c7}
.edge-l{background:linear-gradient(#fff 0 32px,#1a5cb0 32px 60px,#f2f2f2 60px 166px,#b8bcbc 166px)}
.edge-r{background:linear-gradient(#fff 0 166px,#c8cccd 166px)}
.window{border:1px solid #0f8bd0;border-right-color:#1ba0e6;display:flex;flex-direction:column;background:#222832;padding:0 4px 0 3px;min-width:0}

/* title bar */
.titlebar{height:37px;display:flex;align-items:center;padding-bottom:8px}
.titlebar span{flex:none}
.app{display:flex;align-items:center;gap:8px;width:56px;padding-left:6px;padding-top:3px}
.app svg:last-child{margin-bottom:2px}
.qat{display:flex;align-items:center;width:302px;padding-top:5px}
.dim{opacity:.75}
.workspace{width:223px;height:26px;background:#3b4453;display:flex;align-items:center;padding:0 2px 0 4px;margin-top:6px}
.workspace span{flex:1;padding-left:3px;margin-top:-1px}
.custom{margin:4px 0 0 4px}
.plane{margin:5px 0 0 10px}
.share{color:#8cc8f2;width:187px;padding-left:6px;margin-top:6px}
.apptitle{width:179px;margin-top:4px;font-size:14.4px}
.doctitle{width:198px;margin-top:4px}
.tri{margin:5px 0 0 1px}
.search{width:223px;height:26px;background:#454e61;color:#b4b8c0;font-style:italic;font-size:14px;line-height:24px;padding-left:3px;margin:6px 0 0 5px}
.mag{margin:7px 0 0 5px}
.user{margin:6px 0 0 9px}
.username{margin:6px 0 0 6px;width:104px;letter-spacing:.1px}
.cart{margin:7px 0 0 17px}
.a360{margin:6px 0 0 10px}
.a360arr{margin:4px 0 0 7px}
.vsep{width:1px;height:22px;background:#454c58;margin:5px 0 0 12px}
.help{width:20px;height:20px;border-radius:50%;background:#dcdcdc;color:#3b4453;font-weight:700;font-size:14px;line-height:20px;text-align:center;margin:5px 0 0 11px}
.helparr{margin:4px 0 0 10px}
.winbtns{margin:1px 0 0 88px}

/* ribbon tabs */
.tabs{height:26px;display:flex;align-items:center;color:#b3b6ba}
.tabs span{height:26px;line-height:25px;text-align:center;flex:none;margin-top:2px}
.tabs .on{background:#3b4453;color:#fff}
.tabs svg{margin:3px 0 0 25px}
.t1{width:71px}.t2{width:61px}.t3{width:71px}.t4{width:63px}.t5{width:79px}.t6{width:98px}.t7{width:59px}.t8{width:84px}.t9{width:58px}.t10{width:76px}.t11{width:72px}.t12{width:74px}.t13{width:104px}.t14{width:110px}.t15{width:122px}

/* ribbon */
.ribbon{height:124px;display:flex;background:#3b4453;margin-left:1px}
.panel{border-right:1px solid #262c37;box-shadow:1px 0 #444d5c;display:flex;flex-direction:column;flex:none}
.panel:last-child{border:0;box-shadow:none;flex:1}
.body{height:102px;display:flex;padding-top:6px;align-items:flex-start}
.p-text{width:375px}.p-dim{width:425px}.p-cen{width:130px}.p-lead{width:341px}.p-tab{width:305px}.p-mark{width:152px}
.big{display:flex;flex-direction:column;align-items:center;height:96px;flex:none}
.big b{line-height:19px;height:19px}
.big svg+b{margin-top:2px}
.big.s1 svg+b{margin-top:1px}
.big.s2 svg+b{margin-top:3px}
.drop{display:flex}
.drop svg{margin:0 -26px 0 19px}
.p-ann .drop svg{margin:0 -10px 0 3px}
.p-mark .drop svg{margin:2px -19px 0 12px}
.p-text .big{width:90px;padding-left:2px}
.p-dim .big{width:81px}
.p-cen .a{width:55px;margin-left:-2px;padding-right:1px}
.p-cen .c{width:70px}
.p-cen{padding-left:1px}
.p-lead .big{width:87px;padding-left:1px}
.p-lead .big svg{margin-left:-3px}
.p-tab .big{width:51px}
.p-mark .a{width:68px}
.p-mark .c{width:79px}
.p-ann .big{width:119px}
.smalls{display:flex;flex-direction:column;gap:3px;width:31px;padding-left:4px;flex:none}
.p-ann .smalls{padding-left:1px}
.rows{display:flex;flex-direction:column;gap:3px;width:250px;flex:none}
.combo{height:28px;background:#4e5a6d;border:1px solid #2a313d;display:flex;align-items:center;justify-content:space-between;padding:0 4px 0 2px}
.combo.ph{padding-right:1px;color:#b4b8c0}
.combo.n{padding:0 1px 0 4px}
.combo em{font-size:13.6px}
.lay{display:flex}
.lay .combo{flex:1;padding-left:3px;padding-right:5px}
.lay .combo svg{margin-left:auto}
.sw{width:18px;height:18px;background:#1f8000;border:1px solid #e8e8e8;margin-right:3px}
.tools{height:28px;display:flex;align-items:center}
.tools span{flex:none}
.p-dim .tools{padding-left:4px}
.c1{padding-left:7px;width:52px;margin-right:10px}
.c2{margin-left:8px}
.c3{padding-left:6px;width:54px}
.c5{padding-left:7px;width:76px}
.tools.l{padding-left:4px}
.tools .m{margin:0 6px 0 10px}
.p-lead .tools .m{margin-right:7px}
.six{display:grid;grid-template-columns:20px 20px 20px;gap:11px 10px;margin:4px 0 0 4px;flex:none}
.ptitle{height:22px;line-height:22px;position:relative;display:flex;align-items:center;justify-content:center;column-gap:12px}
.ptitle.launch{padding-right:14px}
.ptitle .la{position:absolute;right:5px;top:7px}
.ptitle .ta{margin-left:-5px}
.p-ann .ptitle{padding-right:28px}

/* file tabs */
.files{height:37px;display:grid;grid-template-columns:40px 154px 154px 252px;grid-template-rows:32px;border-bottom:5px solid #3b4453;margin-right:-1px}
.shapes{grid-area:1/1/2/5}
.files span{grid-row:1;line-height:39px;color:#b3b6ba}
.f1{grid-column:2}.files .f2{grid-column:3;color:#fff;font-weight:700;letter-spacing:-.5px}.f3{grid-column:4;letter-spacing:-.2px}

/* drawing area */
.canvas{height:764px;position:relative;margin-right:-1px;background-color:#212830;
background-image:linear-gradient(#333a4b 1px,transparent 1px),linear-gradient(90deg,#333a4b 1px,transparent 1px),
linear-gradient(#272d3a 1px,transparent 1px 50px,#272d3a 50px 51px,transparent 51px 101px,#272d3a 101px 102px,transparent 102px 151px,#272d3a 151px 152px,transparent 152px 202px,#272d3a 202px 203px,transparent 203px),
linear-gradient(90deg,#272d3a 1px,transparent 1px 50px,#272d3a 50px 51px,transparent 51px 101px,#272d3a 101px 102px,transparent 102px 151px,#272d3a 151px 152px,transparent 152px 202px,#272d3a 202px 203px,transparent 203px);
background-size:252px 252px;background-position:181px 43px}
.drawing{position:absolute;left:0;top:0}
.vplabel{position:absolute;left:4px;top:6px;font-size:13.7px;color:#f4f4f4}
.vplabel span{letter-spacing:1.8px}
.history{position:absolute;left:990px;top:658px;display:flex;flex-direction:column;align-items:flex-start;gap:6px;font:14.97px "DejaVu Sans Mono",monospace}
.history span{height:19px;line-height:19px;background:#5c5e60;border-radius:2px;padding:0 2px;color:#f4f4f4}
.history .h1{background:#505254;color:#b4b6b8}
.history .h2{background:#57595b;color:#d6d7d8}
.cmd{position:absolute;left:381px;top:732px;width:1144px;height:32px;display:flex;background:#2b313d}
.input{flex:1;background:#bdbec0;display:flex;align-items:center;padding:0 5px;border-radius:2px 2px 0 0}
.input em{font:italic 14.9px "DejaVu Sans Mono",monospace;color:#66696d;padding-left:6px}
.input .up{margin-left:auto}

/* bottom bar */
.bottom{height:40px;display:flex;border-top:2px solid #3f464f;justify-content:space-between;margin-right:-1px}
.layouts{display:grid;grid-template-columns:30px 72px 81px 117px;grid-template-rows:24px;margin-top:-2px}
.layouts svg{grid-area:1/1/2/5}
.layouts span{grid-row:1;line-height:26px;color:#b3b6ba}
.layouts .m1{grid-column:2;color:#fff;font-weight:700;letter-spacing:-.35px}.m2{grid-column:3}.m3{grid-column:4}
.status{display:flex;gap:3px;height:30px;margin-top:1px;padding-right:2px}
.g{background:#3b4453;display:flex;height:30px;flex:none;overflow:hidden}
.g1{width:59px;padding-left:4px;line-height:30px;color:#fff}
.blue{background:#5d8bbf;margin:1px 0}
.g4{margin-left:-2px}
.g2 .blue,.g5 .blue{margin:0}
.g5 b{line-height:31px;width:18px;letter-spacing:-.4px}
.g5{width:131px}
.g7{margin-left:-1px}

/* taskbar */
.taskbar{grid-column:1/4;background:linear-gradient(90deg,#21373f,#243a42 22%,#21343f 50%,#1c2b41 68%,#1a2845);display:flex;justify-content:space-between}
.apps{display:flex;padding-left:1px}
.apps svg{margin-left:-2px}
.apps span{width:62px;height:50px;display:flex;align-items:center;justify-content:center;border:solid transparent;border-width:0 5px 0 6px}
.apps span:nth-child(1){width:58px}.apps span:nth-child(2){width:64px;padding-right:2px}
.apps .run{background:linear-gradient(#76b9ed,#76b9ed) bottom/100% 3px no-repeat padding-box}
.apps .on{border-width:0 4px 0 0;width:61px;background:linear-gradient(#76b9ed,#76b9ed) bottom/100% 3px no-repeat border-box,linear-gradient(#4f6068,#4f6068) padding-box;border-color:#3a4b53}
.apps .on svg{margin-left:5px}
.tray{display:flex;align-items:center}
.rain{font-size:18.3px;width:118px;padding-left:17px;margin-right:16px;line-height:51px;letter-spacing:-.55px}
.car{margin-right:10px}
.bat{margin-right:11px}.wif{margin-right:11px}.vol{margin-right:14px}.pen{margin-right:16px}
.rou{width:45px;letter-spacing:-.3px}
.clock{display:flex;flex-direction:column;text-align:center;line-height:23.5px;width:70px;font-size:14px;letter-spacing:-.3px;margin-right:21px}
.note{margin:5px 0 0}
.peek{width:1px;height:50px;background:#5c6a78;margin:0 5px 0 14px}
```
